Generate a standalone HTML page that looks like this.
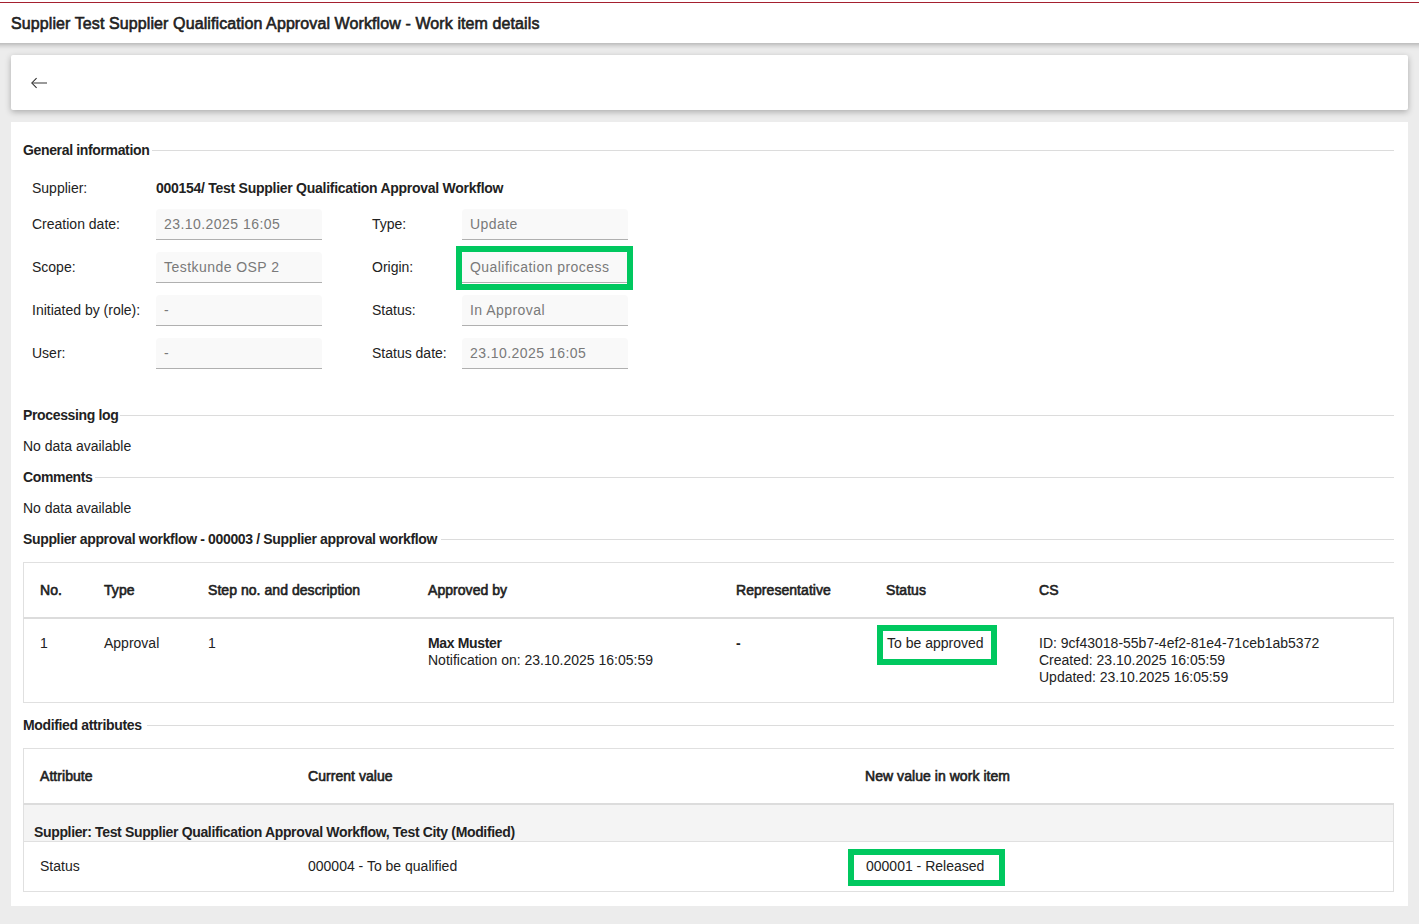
<!DOCTYPE html>
<html><head><meta charset="utf-8">
<style>
*{box-sizing:border-box}
html,body{margin:0;padding:0}
body{width:1419px;height:924px;overflow:hidden;background:#ececec;font-family:"Liberation Sans",sans-serif;font-size:14px;color:#222;position:relative}
.a{position:absolute;white-space:nowrap;line-height:16px}
.b{font-weight:bold;letter-spacing:-0.35px}
.m{font-weight:normal;letter-spacing:0.05px;-webkit-text-stroke:0.6px #212121}
#topline{position:absolute;left:0;top:2px;width:1419px;height:1px;background:#a4202f}
#hdr{position:absolute;left:-20px;top:0;width:1459px;height:43px;background:#fff;box-shadow:0 2px 5px rgba(0,0,0,.25)}
#nav{position:absolute;left:11px;top:55px;width:1397px;height:55px;background:#fff;border-radius:2px;box-shadow:0 2px 6px rgba(0,0,0,.28)}
#main{position:absolute;left:11px;top:122px;width:1397px;height:784px;background:#fff}
.line{position:absolute;height:1px;background:#dcdcdc}
.inp{position:absolute;height:31px;background:#f9f9f9;border-bottom:1px solid #b0b0b0;border-radius:4px 4px 0 0;color:#7a7a7a}
.inp span{position:absolute;left:8px;top:7px;line-height:16px;white-space:nowrap;letter-spacing:0.45px}
.g{position:absolute;border:6px solid #00c85f}
.tb{position:absolute;border-left:1px solid #e0e0e0;border-top:1px solid #e0e0e0}
.tr{position:absolute;border:1px solid #e0e0e0;border-top:0}
</style></head><body>
<div id="hdr"></div>
<div id="topline"></div>
<div class="a m" style="left:11px;top:15px;font-size:16px;line-height:18px;letter-spacing:0.1px">Supplier Test Supplier Qualification Approval Workflow - Work item details</div>
<div id="nav"></div>
<svg style="position:absolute;left:0;top:0" width="60" height="100" viewBox="0 0 60 100"><path d="M36.6 78.2 L31.8 83 L36.6 87.8" fill="none" stroke="#2a2a2a" stroke-width="1.05"/><rect x="32.5" y="82.5" width="14.5" height="1" fill="#363636"/></svg>
<div id="main"></div>

<!-- General information -->
<div class="a b" style="left:23px;top:142px">General information</div>
<div class="line" style="left:152px;top:150px;width:1242px"></div>

<div class="a" style="left:32px;top:180px">Supplier:</div>
<div class="a b" style="left:156px;top:180px;letter-spacing:-0.27px">000154/ Test Supplier Qualification Approval Workflow</div>

<div class="a" style="left:32px;top:216px">Creation date:</div>
<div class="inp" style="left:156px;top:209px;width:166px"><span>23.10.2025 16:05</span></div>
<div class="a" style="left:372px;top:216px">Type:</div>
<div class="inp" style="left:462px;top:209px;width:166px"><span>Update</span></div>

<div class="a" style="left:32px;top:259px">Scope:</div>
<div class="inp" style="left:156px;top:252px;width:166px"><span>Testkunde OSP 2</span></div>
<div class="a" style="left:372px;top:259px">Origin:</div>
<div class="inp" style="left:462px;top:252px;width:166px"><span>Qualification process</span></div>

<div class="a" style="left:32px;top:302px">Initiated by (role):</div>
<div class="inp" style="left:156px;top:295px;width:166px"><span>-</span></div>
<div class="a" style="left:372px;top:302px">Status:</div>
<div class="inp" style="left:462px;top:295px;width:166px"><span>In Approval</span></div>

<div class="a" style="left:32px;top:345px">User:</div>
<div class="inp" style="left:156px;top:338px;width:166px"><span>-</span></div>
<div class="a" style="left:372px;top:345px">Status date:</div>
<div class="inp" style="left:462px;top:338px;width:166px"><span>23.10.2025 16:05</span></div>

<div class="g" style="left:456px;top:246px;width:177px;height:44px"></div>

<!-- Processing log -->
<div class="a b" style="left:23px;top:407px">Processing log</div>
<div class="line" style="left:120px;top:415px;width:1274px"></div>
<div class="a" style="left:23px;top:438px">No data available</div>
<div class="a b" style="left:23px;top:469px">Comments</div>
<div class="line" style="left:95px;top:477px;width:1299px"></div>
<div class="a" style="left:23px;top:500px">No data available</div>
<div class="a b" style="left:23px;top:531px">Supplier approval workflow - 000003 / Supplier approval workflow</div>
<div class="line" style="left:441px;top:539px;width:953px"></div>

<!-- Table 1 -->
<div style="position:absolute;left:23px;top:562px;width:1371px;height:57px;border-top:1px solid #e0e0e0;border-left:1px solid #e0e0e0;border-bottom:2px solid #dcdcdc"></div>
<div style="position:absolute;left:23px;top:619px;width:1371px;height:84px;border:1px solid #e0e0e0;border-top:0"></div>
<div class="a m" style="left:40px;top:582px">No.</div>
<div class="a m" style="left:104px;top:582px">Type</div>
<div class="a m" style="left:208px;top:582px">Step no. and description</div>
<div class="a m" style="left:428px;top:582px">Approved by</div>
<div class="a m" style="left:736px;top:582px">Representative</div>
<div class="a m" style="left:886px;top:582px">Status</div>
<div class="a m" style="left:1039px;top:582px">CS</div>

<div class="a" style="left:40px;top:635px">1</div>
<div class="a" style="left:104px;top:635px">Approval</div>
<div class="a" style="left:208px;top:635px">1</div>
<div class="a b" style="left:428px;top:635px">Max Muster</div>
<div class="a" style="left:428px;top:652px">Notification on: 23.10.2025 16:05:59</div>
<div class="a b" style="left:736px;top:635px">-</div>
<div class="a" style="left:887px;top:635px">To be approved</div>
<div class="a" style="left:1039px;top:635px">ID: 9cf43018-55b7-4ef2-81e4-71ceb1ab5372</div>
<div class="a" style="left:1039px;top:652px">Created: 23.10.2025 16:05:59</div>
<div class="a" style="left:1039px;top:669px">Updated: 23.10.2025 16:05:59</div>
<div class="g" style="left:877px;top:625px;width:120px;height:40px"></div>

<!-- Modified attributes -->
<div class="a b" style="left:23px;top:717px">Modified attributes</div>
<div class="line" style="left:147px;top:725px;width:1247px"></div>

<div style="position:absolute;left:23px;top:748px;width:1371px;height:57px;border-top:1px solid #e0e0e0;border-left:1px solid #e0e0e0;border-bottom:2px solid #dcdcdc"></div>
<div style="position:absolute;left:23px;top:805px;width:1371px;height:37px;background:#f4f4f4;border:1px solid #e0e0e0;border-top:0"></div>
<div style="position:absolute;left:23px;top:842px;width:1371px;height:50px;border:1px solid #e0e0e0;border-top:0"></div>
<div class="a m" style="left:40px;top:768px">Attribute</div>
<div class="a m" style="left:308px;top:768px">Current value</div>
<div class="a m" style="left:865px;top:768px">New value in work item</div>
<div class="a b" style="left:34px;top:824px">Supplier: Test Supplier Qualification Approval Workflow, Test City (Modified)</div>
<div class="a" style="left:40px;top:858px">Status</div>
<div class="a" style="left:308px;top:858px">000004 - To be qualified</div>
<div class="a" style="left:866px;top:858px">000001 - Released</div>
<div class="g" style="left:848px;top:849px;width:157px;height:37px"></div>

</body></html>
